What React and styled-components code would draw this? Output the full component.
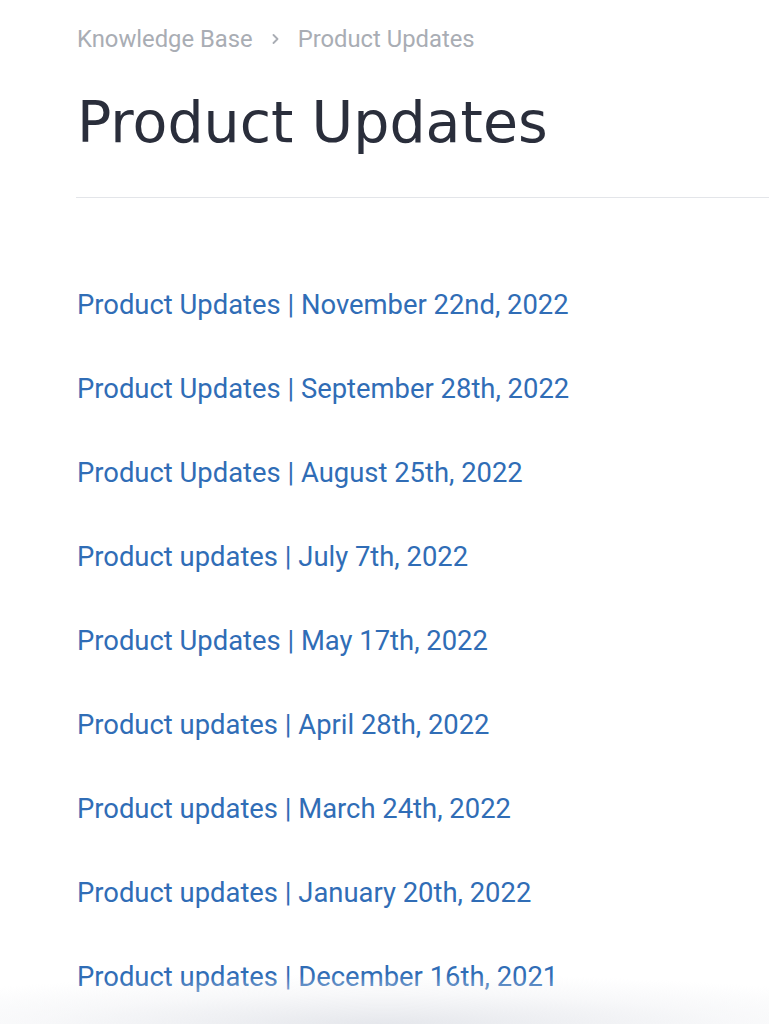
import React from "react";
import styled, { createGlobalStyle } from "styled-components";

const GlobalStyle = createGlobalStyle`
  html, body {
    margin: 0;
    padding: 0;
    background: #fff;
    overflow: hidden;
  }
`;

const Page = styled.main`
  padding: 22px 0 0 77px;
  min-height: 1024px;
  box-sizing: border-box;
`;

const Crumbs = styled.nav`
  display: flex;
  align-items: center;
  font-family: Roboto, "Liberation Sans", sans-serif;
  font-size: 23.8px;
  color: #a9adb4;
  line-height: 34px;
`;

const Chevron = styled.svg`
  width: 8px;
  height: 10px;
  margin: 0 18px 0 19px;
`;

const Title = styled.h1`
  margin: 34px 0 0;
  font-family: "DejaVu Sans", "Noto Sans", sans-serif;
  font-weight: 400;
  font-size: 57px;
  line-height: 64px;
  color: #2a2e3b;
`;

const Divider = styled.hr`
  margin: 43px 0 0 -1px;
  border: 0;
  border-top: 1px solid #e3e5e9;
`;

const List = styled.ul`
  list-style: none;
  margin: 90px 0 0;
  padding: 0;
  display: flex;
  flex-direction: column;
  gap: 50px;
`;

const Item = styled.li`
  font-family: Roboto, "Liberation Sans", sans-serif;
  font-size: 27.4px;
  line-height: 34px;
`;

const ItemLink = styled.a`
  color: #306db6;
  text-decoration: none;
`;

const BottomFade = styled.div`
  position: fixed;
  left: 0;
  right: 0;
  bottom: 0;
  height: 50px;
  background: radial-gradient(ellipse 75% 100% at 50% 100%, rgba(228, 230, 235, 0.95), rgba(240, 241, 244, 0.5) 60%, rgba(255, 255, 255, 0) 100%);
  pointer-events: none;
`;

const updates = [
  "Product Updates | November 22nd, 2022",
  "Product Updates | September 28th, 2022",
  "Product Updates | August 25th, 2022",
  "Product updates | July 7th, 2022",
  "Product Updates | May 17th, 2022",
  "Product updates | April 28th, 2022",
  "Product updates | March 24th, 2022",
  "Product updates | January 20th, 2022",
  "Product updates | December 16th, 2021",
];

export default function App() {
  return (
    <>
      <GlobalStyle />
      <Page>
        <Crumbs>
          <span>Knowledge Base</span>
          <Chevron viewBox="0 0 8 10" fill="none">
            <path d="M1.5 1l4 4-4 4" stroke="#a9adb4" strokeWidth="1.8" strokeLinecap="round" strokeLinejoin="round" />
          </Chevron>
          <span>Product Updates</span>
        </Crumbs>
        <Title>Product Updates</Title>
        <Divider />
        <List>
          {updates.map((u) => (
            <Item key={u}>
              <ItemLink href="#">{u}</ItemLink>
            </Item>
          ))}
        </List>
      </Page>
      <BottomFade />
    </>
  );
}
